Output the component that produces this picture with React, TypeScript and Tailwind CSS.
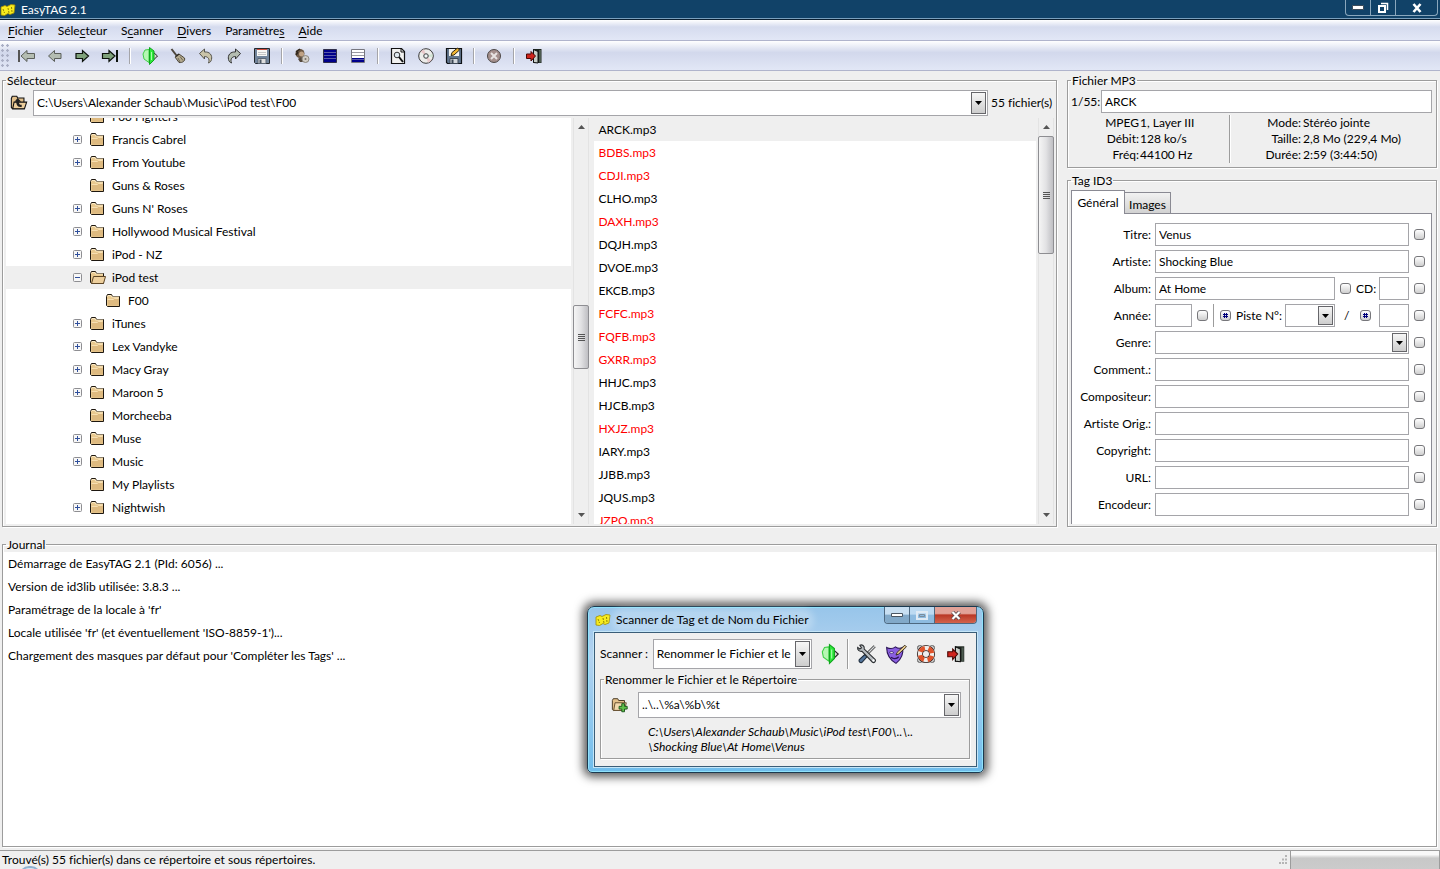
import type React from "react"

import { useState } from "react"

interface TreeItem {
  name: string
  expander?: "plus" | "minus"
  child?: boolean
  selected?: boolean
}

const folders: TreeItem[] = [
  { name: "Foo Fighters" },
  { name: "Francis Cabrel", expander: "plus" },
  { name: "From Youtube", expander: "plus" },
  { name: "Guns & Roses" },
  { name: "Guns N' Roses", expander: "plus" },
  { name: "Hollywood Musical Festival", expander: "plus" },
  { name: "iPod - NZ", expander: "plus" },
  { name: "iPod test", expander: "minus", selected: true },
  { name: "F00", child: true },
  { name: "iTunes", expander: "plus" },
  { name: "Lex Vandyke", expander: "plus" },
  { name: "Macy Gray", expander: "plus" },
  { name: "Maroon 5", expander: "plus" },
  { name: "Morcheeba" },
  { name: "Muse", expander: "plus" },
  { name: "Music", expander: "plus" },
  { name: "My Playlists" },
  { name: "Nightwish", expander: "plus" },
]

const files = [
  { name: "ARCK.mp3", changed: false },
  { name: "BDBS.mp3", changed: true },
  { name: "CDJI.mp3", changed: true },
  { name: "CLHO.mp3", changed: false },
  { name: "DAXH.mp3", changed: true },
  { name: "DQJH.mp3", changed: false },
  { name: "DVOE.mp3", changed: false },
  { name: "EKCB.mp3", changed: false },
  { name: "FCFC.mp3", changed: true },
  { name: "FQFB.mp3", changed: true },
  { name: "GXRR.mp3", changed: true },
  { name: "HHJC.mp3", changed: false },
  { name: "HJCB.mp3", changed: false },
  { name: "HXJZ.mp3", changed: true },
  { name: "IARY.mp3", changed: false },
  { name: "JJBB.mp3", changed: false },
  { name: "JQUS.mp3", changed: false },
  { name: "JZPQ.mp3", changed: true },
]

const journal = [
  "Démarrage de EasyTAG 2.1 (PId: 6056) ...",
  "Version de id3lib utilisée: 3.8.3 ...",
  "Paramétrage de la locale à 'fr'",
  "Locale utilisée 'fr' (et éventuellement 'ISO-8859-1')...",
  "Chargement des masques par défaut pour 'Compléter les Tags' ...",
]

const menus = [
  ["", "F", "ichier"],
  ["Séle", "c", "teur"],
  ["S", "c", "anner"],
  ["", "D", "ivers"],
  ["Paramètre", "s", ""],
  ["", "A", "ide"],
]

const inputClass = "h-[23px] min-w-0 border border-[#a5a5a9] bg-white px-[3px] outline-none"

/* ---------- Icons ---------- */

const Icon = ({ size = 20, children }: { size?: number; children: React.ReactNode }) => (
  <svg width={size} height={size} viewBox="0 0 20 20" fill="none" className="shrink-0" aria-hidden="true">
    {children}
  </svg>
)

const FirstIcon = () => (
  <Icon>
    <path d="M3 4v12" stroke="#555" strokeWidth="2" />
    <path d="M5 10l6-5.500v3h7.500v5H11v3z" fill="#b4bdb2" stroke="#5b5f5b" />
  </Icon>
)

const PreviousIcon = () => (
  <Icon>
    <path d="M4.500 10l6-5.500v3H17v5h-6.500v3z" fill="#b4bdb2" stroke="#5b5f5b" />
  </Icon>
)

const NextIcon = () => (
  <Icon>
    <path d="M16.500 10l-6-5.500v3H4v5h6.500v3z" fill="#7ea17a" stroke="#0c120c" strokeWidth="1.200" />
  </Icon>
)

const LastIcon = () => (
  <Icon>
    <path d="M15 10L9 4.500v3H2.500v5H9v3z" fill="#7ea17a" stroke="#0c120c" strokeWidth="1.200" />
    <path d="M17 4v12" stroke="#0c120c" strokeWidth="2" />
  </Icon>
)

const ScanIcon = ({ size = 20 }: { size?: number }) => (
  <Icon size={size}>
    <path d="M9 3.500L5 4 3 8l1 5 5 3.500z" fill="#b6f7b4" stroke="#3fd048" />
    <path d="M13.500 6.500l4 3.500-4 4z" fill="#d8dcd2" stroke="#222" />
    <path d="M9.500 1.500v17l4.500-4.500V5z" fill="#2fe63c" stroke="#0ea61c" />
    <path d="M11.500 6v8" stroke="#a5ffa6" />
  </Icon>
)

const BroomIcon = () => (
  <Icon>
    <path d="M3.500 3l5 6.500" stroke="#4d463d" strokeWidth="2" />
    <path d="M7 11l4-3 5.500 4c1 3-2 5-5.500 4.500z" fill="#b5ab90" stroke="#4b463a" />
    <path d="M8 10.500L11 8" stroke="#2e2a22" strokeWidth="1.500" />
    <path d="M10 12l2 4M12 10.500l3 4" stroke="#6d6857" />
  </Icon>
)

const UndoIcon = () => (
  <Icon>
    <path d="M3.500 7.500L8.500 3v3c5-.5 8 3 7 7.500-.5 2-1.500 3-3 3.500 1.500-4-.5-6.500-4-6.500v2.500z" fill="#c9c3a8" stroke="#55534b" />
  </Icon>
)

const RedoIcon = () => (
  <Icon>
    <path d="M16.500 7.500L11.500 3v3c-5-.5-8 3-7 7.500.5 2 1.500 3 3 3.500-1.500-4 .5-6.500 4-6.500v2.500z" fill="#b4bdb2" stroke="#333" />
  </Icon>
)

const SaveIcon = () => (
  <Icon>
    <path d="M2.500 2.500h15v15h-14l-1-1z" fill="#71849b" stroke="#23272c" />
    <path d="M5 3h10v7H5z" fill="#f7f7f5" />
    <path d="M5 3.500h10" stroke="#d04a3a" />
    <path d="M6 6.500h8M6 8.500h8" stroke="#c5c5c5" />
    <path d="M6 12.500h8v5H6z" fill="#dedede" stroke="#5b6674" />
    <path d="M7.500 13.500h2v3.500h-2z" fill="#4b5663" />
  </Icon>
)

const ArtistIcon = () => (
  <Icon>
    <circle cx="8" cy="7.500" r="4.500" fill="#6b5641" />
    <circle cx="9.500" cy="8" r="2.500" fill="#c0a284" />
    <path d="M4 6l4-3M4 9l2-3" stroke="#2e261e" strokeWidth="1.500" />
    <path d="M6 13c2-2 5-2 6 0l1 3H8z" fill="#55493d" />
    <circle cx="13.500" cy="13" r="3.500" fill="#d2cdc5" stroke="#8d877e" />
    <circle cx="13.500" cy="13" r="1" fill="#77716a" />
  </Icon>
)

const SelectAllIcon = () => (
  <Icon>
    <path d="M3.500 3.500h13v13h-13z" fill="#00008b" stroke="#30304a" />
    <path d="M4 6.500h12M4 9.500h12M4 12.500h12" stroke="#5a5aa8" />
  </Icon>
)

const InvertIcon = () => (
  <Icon>
    <path d="M3.500 3.500h13v13h-13z" fill="#fff" stroke="#77777f" />
    <path d="M4 6.500h12M4 9.500h12" stroke="#9a9aa2" />
    <path d="M4 12h12v4H4z" fill="#00008b" />
    <path d="M4 13.500h12" stroke="#5a5aa8" />
  </Icon>
)

const SearchIcon = () => (
  <Icon>
    <path d="M3.500 2.500h10l3 3v12h-13z" fill="#f1f1ef" stroke="#111" strokeWidth="1.200" />
    <path d="M13 2.500V6h3.500" stroke="#111" />
    <circle cx="9" cy="9" r="2.800" fill="#dfe9ee" stroke="#333" />
    <path d="M11 11l4 5" stroke="#111" strokeWidth="2" />
  </Icon>
)

const DiscIcon = () => (
  <Icon>
    <circle cx="10" cy="10" r="7.300" fill="#ececea" stroke="#3b3b3b" />
    <path d="M10 10L4.500 5.500 8 3.200z" fill="#e9c7c9" />
    <path d="M10 10l5.500 4.500-3.500 2.300z" fill="#e9c9cc" />
    <path d="M10 10l6.500-2v3z" fill="#cfe6d2" />
    <circle cx="10" cy="10" r="2.300" fill="#cdd5da" stroke="#4d4d4d" />
    <circle cx="10" cy="10" r="1" fill="#fff" />
  </Icon>
)

const SaveEditIcon = () => (
  <Icon>
    <path d="M2.500 2.500h15v15h-14l-1-1z" fill="#61758c" stroke="#0f1215" strokeWidth="1.200" />
    <path d="M5 3h10v7H5z" fill="#f3f3f0" />
    <path d="M6 12.500h8v5H6z" fill="#d4d8dc" stroke="#3c4754" />
    <path d="M7.500 13.500h2v3.500h-2z" fill="#3b4653" />
    <path d="M7 9.500l1-3 5.500-4.500 2 2-5.500 5z" fill="#f2b632" stroke="#2c2410" />
  </Icon>
)

const StopIcon = () => (
  <Icon>
    <circle cx="10" cy="10" r="6.500" fill="#a48f8c" stroke="#4c4746" />
    <path d="M7 7l6 6M13 7l-6 6" stroke="#e8e4e3" strokeWidth="2" />
  </Icon>
)

const ExitIcon = ({ size = 20 }: { size?: number }) => (
  <Icon size={size}>
    <path d="M9 3h8.500v14H9z" fill="#1c241e" />
    <path d="M9.500 3.500l4.500 2V17l-4.500-.5z" fill="#c9cfc9" stroke="#111" />
    <path d="M15 4h2v12.500h-2z" fill="#4c5a4f" />
    <path d="M11.500 10L7 5.500v2.500H2.500v4.500H7V15z" fill="#d0241c" stroke="#4a0906" />
  </Icon>
)

const FolderIcon = ({ open = false }: { open?: boolean }) => (
  <svg width="16" height="16" viewBox="0 0 16 16" fill="none" className="shrink-0" aria-hidden="true">
    <path d="M.5 3.500l1-2h4l1 2h7v10H1.500l-1-1z" fill="#e9c98f" stroke="#1d1710" />
    <path d="M1.500 3.500l.5-1h3l.5 1.500H13" stroke="#fbe9c4" />
    {open ? (
      <path d="M3.500 6.500h12l-2 7h-12z" fill="#edcf9d" stroke="#5c4526" />
    ) : (
      <path d="M2 6h11v6.500H2z" fill="#deba80" />
    )}
    {!open && <path d="M1.500 6.500h6l1-1h4" stroke="#f7dfb2" />}
  </svg>
)

const UpFolderIcon = () => (
  <Icon size={18}>
    <path d="M1.500 5l1-2.500h5l1 2h7V16h-13l-1-1z" fill="#e2c08a" stroke="#111" strokeWidth="1.200" />
    <path d="M4.500 9h14l-2.500 7.500H3z" fill="#edcf9d" stroke="#111" strokeWidth="1.200" />
    <path d="M8.500 4.500L5 8.500h2c0 4 1.500 6 6 6v-2.500c-2.500 0-3-1-3-3.500h2.500z" fill="#222" />
  </Icon>
)

const AddFolderIcon = () => (
  <Icon size={18}>
    <path d="M1.500 5l1-2h5l1 2h6.500v11H2.500l-1-1z" fill="#e2c08a" stroke="#3b2d18" />
    <path d="M4.500 7.500H17L15 16H3z" fill="#f1d9ad" stroke="#5c4526" />
    <path d="M12 8.500h3v3h3v3h-3v3h-3v-3H9v-3h3z" fill="#5fbf4a" stroke="#17521a" />
  </Icon>
)

const ToolsIcon = () => (
  <Icon size={22}>
    <path d="M17 3L7 13" stroke="#333" strokeWidth="2.600" />
    <path d="M17 3L7 13" stroke="#d5d8da" strokeWidth="1.200" />
    <path d="M8 10.500l2 2-4.500 5c-1.500 1-3.500-.5-2.500-2.500z" fill="#52749b" stroke="#1e2c3b" />
    <path d="M3.500 2c2-.8 4.500.5 4 3.500l10 9.500c1 1.500-1 3.500-2.500 2.500L5.500 7.500C3 8 1 6 1.500 4l2 1.500 1.500-1z" fill="#b9bec2" stroke="#2d3033" />
    <circle cx="15.800" cy="15.800" r="1" fill="#fff" />
  </Icon>
)

const MaskIcon = () => (
  <Icon size={22}>
    <path d="M1.500 4c3 1.500 5.500 1.500 8-.5 2 1.500 4.500 1.500 6.500.5 1 6-1.500 11-6 14.500C5 15.500 1.500 10.500 1.500 4z" fill="#8a5fe0" stroke="#2b1457" />
    <path d="M4 8.500c1.500-1 3-.8 4 .3-1.500 1-3 .8-4-.3z" fill="#fff" stroke="#2b1457" strokeWidth=".6" />
    <path d="M5.500 13c2 1.500 5 1.500 7-.5" stroke="#2b1457" strokeWidth="1.300" />
    <path d="M10 11l1-2.500L18 2l1.500 1.500L12.500 10z" fill="#e5c98b" stroke="#2a2112" strokeWidth=".8" />
  </Icon>
)

const HelpIcon = () => (
  <Icon size={22}>
    <path d="M2.500 6V3.500l1-1H6M14 2.500h2.500l1 1V6M17.500 14v2.500l-1 1H14M6 17.500H3.500l-1-1V14" stroke="#666" />
    <circle cx="10" cy="10" r="5.500" stroke="#2a1a16" strokeWidth="5.500" />
    <circle cx="10" cy="10" r="5.500" stroke="#f0ece9" strokeWidth="4" />
    <circle cx="10" cy="10" r="5.500" stroke="#e0532a" strokeWidth="4" strokeDasharray="5.200 3.440" strokeDashoffset="-1.700" />
  </Icon>
)

const AppIcon = () => (
  <svg width="16" height="14" viewBox="0 0 16 14" className="shrink-0" aria-hidden="true">
    <path d="M1 4l4-1.500 2 1 4-2 4 .5-1 8-4 1.500-2-1-3.500 2L1 12z" fill="#f7ec1e" stroke="#a08c00" strokeWidth=".8" />
    <path d="M3 6l1.500 4M8 5l1 5M11.500 4l.5 5" stroke="#8f8200" strokeWidth="1" strokeDasharray="2 1" />
  </svg>
)

/* ---------- Small widgets ---------- */

const MiniButton = ({ label, hash = false }: { label: string; hash?: boolean }) => (
  <button
    type="button"
    aria-label={label}
    className="flex h-[11px] w-[11px] shrink-0 items-center justify-center rounded-[3px] border border-[#77777b] bg-linear-to-b from-white to-[#cfcfcf]"
  >
    {hash && (
      <svg width="7" height="7" viewBox="0 0 7 7" aria-hidden="true">
        <path d="M2.500 1v5M4.500 1v5M1 2.500h5M1 4.500h5" stroke="#00007a" strokeWidth="1" />
      </svg>
    )}
  </button>
)

interface ComboProps {
  id: string
  label?: string
  value?: string
  className: string
}

const Combo = ({ id, label, value = "", className }: ComboProps) => (
  <div className={`relative flex ${className}`}>
    <select
      id={id}
      aria-label={label}
      className="w-full min-w-0 appearance-none border border-[#a5a5a9] bg-white pr-[18px] pl-[3px] outline-none"
    >
      <option>{value}</option>
    </select>
    <span className="pointer-events-none absolute inset-y-0.5 right-0.5 flex w-[15px] items-center justify-center border border-[#66666a] bg-linear-to-b from-[#f6f6f6] to-[#cdcdcd]">
      <svg width="7" height="4" viewBox="0 0 7 4" aria-hidden="true">
        <path d="M0 0h7L3.500 4z" fill="#000" />
      </svg>
    </span>
  </div>
)

interface ScrollbarProps {
  before: number
  thumb: number
  after: number
}

const Scrollbar = ({ before, thumb, after }: ScrollbarProps) => (
  <div
    style={{ gridTemplateRows: `18px ${before}fr ${thumb}fr ${after}fr 18px` }}
    className="grid w-4 shrink-0 border-x border-[#e3e3e3] bg-[#efefef]"
  >
    <div className="flex items-center justify-center">
      <svg width="7" height="4" viewBox="0 0 7 4" aria-hidden="true">
        <path d="M0 4h7L3.500 0z" fill="#555" />
      </svg>
    </div>
    <div />
    <div className="-mx-px flex flex-col items-center justify-center gap-px rounded-[2px] border border-[#8e8e92] bg-linear-to-r from-[#f5f5f5] via-[#e2e2e4] to-[#bfbfc3]">
      <span className="h-px w-[7px] bg-[#555]" />
      <span className="h-px w-[7px] bg-[#555]" />
      <span className="h-px w-[7px] bg-[#555]" />
      <span className="h-px w-[7px] bg-[#555]" />
    </div>
    <div />
    <div className="flex items-center justify-center">
      <svg width="7" height="4" viewBox="0 0 7 4" aria-hidden="true">
        <path d="M0 0h7L3.500 4z" fill="#555" />
      </svg>
    </div>
  </div>
)

interface FrameProps {
  title: string
  className?: string
  bodyClassName?: string
  children: React.ReactNode
}

const Frame = ({ title, className = "", bodyClassName = "", children }: FrameProps) => (
  <fieldset
    className={`flex min-w-0 flex-col border border-[#9c9c9c] shadow-[1px_1px_0_#fff,inset_1px_1px_0_#fff] ${className}`}
  >
    <legend className="ml-[3px] h-[15px] px-px leading-4">{title}</legend>
    <div className={`min-h-0 flex-1 ${bodyClassName}`}>{children}</div>
  </fieldset>
)

const ToolButton = ({ label, children }: { label: string; children: React.ReactNode }) => (
  <button type="button" aria-label={label} className="flex h-full w-7 items-center justify-center">
    {children}
  </button>
)

const ToolSeparator = () => (
  <div className="flex w-3 justify-center">
    <span className="h-4 w-0.5 border-r border-l border-r-white border-l-[#a5a5a9]" />
  </div>
)

/* ---------- Panels ---------- */

const TitleBar = () => (
  <header className="flex h-5 shrink-0 items-start justify-between border-b border-[#0b1f31] bg-[#114268] text-white shadow-[inset_0_-1px_0_#7ba0bd]">
    <div className="flex h-[19px] items-center gap-[5px]">
      <AppIcon />
      <h1>EasyTAG 2.1</h1>
    </div>
    <div className="mr-0.5 flex h-4 divide-x divide-[#8aa7bd] rounded-b-[4px] border border-t-0 border-[#8aa7bd]">
      <button type="button" aria-label="Réduire" className="flex w-[25px] items-center justify-center">
        <svg width="12" height="5" viewBox="0 0 12 5" aria-hidden="true">
          <path d="M.5.500h11v4H.5z" fill="#fff" stroke="#3d4c5a" />
        </svg>
      </button>
      <button type="button" aria-label="Restaurer" className="flex w-[25px] items-center justify-center">
        <svg width="12" height="12" viewBox="0 0 12 12" fill="none" aria-hidden="true">
          <path d="M4 1.500h6.500V8" stroke="#fff" strokeWidth="1.500" />
          <path d="M2 4h6v6H2z" stroke="#fff" strokeWidth="2" />
        </svg>
      </button>
      <button type="button" aria-label="Fermer" className="flex w-[41px] items-center justify-center">
        <svg width="12" height="10" viewBox="0 0 12 10" aria-hidden="true">
          <path d="M2.500 1l7 8M9.500 1l-7 8" stroke="#fff" strokeWidth="2.600" />
        </svg>
      </button>
    </div>
  </header>
)

const MenuBar = () => (
  <nav className="flex h-[21px] shrink-0 items-center gap-3.5 border-b border-[#b0b4cc] bg-linear-to-b from-white from-0% via-[#d5dbee] via-35% to-[#e2e7f6] pt-0.5 pl-2">
    {menus.map(([before, key, after]) => (
      <button key={before + key + after} type="button">
        {before}
        <u className="underline-offset-2">{key}</u>
        {after}
      </button>
    ))}
  </nav>
)

const ToolBar = () => (
  <div className="flex h-[30px] shrink-0 items-center border-b border-[#b0b4cc] bg-linear-to-b from-white from-0% via-[#d2d8ec] via-40% to-[#e2e7f6]">
    <div className="mr-0.5 h-[26px] w-2.5 bg-[radial-gradient(circle,#a9aec4_1px,transparent_1.500px)] bg-[size:5px_5px]" />
    <ToolButton label="Premier fichier"><FirstIcon /></ToolButton>
    <ToolButton label="Fichier précédent"><PreviousIcon /></ToolButton>
    <ToolButton label="Fichier suivant"><NextIcon /></ToolButton>
    <ToolButton label="Dernier fichier"><LastIcon /></ToolButton>
    <ToolSeparator />
    <ToolButton label="Scanner les fichiers"><ScanIcon /></ToolButton>
    <ToolButton label="Effacer les tags"><BroomIcon /></ToolButton>
    <ToolButton label="Annuler"><UndoIcon /></ToolButton>
    <ToolButton label="Rétablir"><RedoIcon /></ToolButton>
    <ToolButton label="Enregistrer"><SaveIcon /></ToolButton>
    <ToolSeparator />
    <ToolButton label="Afficher par artiste"><ArtistIcon /></ToolButton>
    <ToolButton label="Tout sélectionner"><SelectAllIcon /></ToolButton>
    <ToolButton label="Inverser la sélection"><InvertIcon /></ToolButton>
    <ToolSeparator />
    <ToolButton label="Rechercher"><SearchIcon /></ToolButton>
    <ToolButton label="CDDB"><DiscIcon /></ToolButton>
    <ToolButton label="Créer une liste"><SaveEditIcon /></ToolButton>
    <ToolSeparator />
    <ToolButton label="Arrêter"><StopIcon /></ToolButton>
    <ToolSeparator />
    <ToolButton label="Quitter"><ExitIcon /></ToolButton>
  </div>
)

const FolderTree = () => (
  <div className="min-w-0 flex-[566] overflow-hidden bg-white">
    {/* the list is scrolled part way into its first row */}
    <ul className="-mt-[13px]">
      {folders.map((folder) => (
        <li
          key={folder.name}
          className={`flex h-[23px] items-center ${folder.child ? "pl-[83px]" : "pl-[67px]"} ${
            folder.selected ? "bg-[#efefef]" : ""
          }`}
        >
          <span className="mr-2 flex h-[9px] w-[9px] shrink-0">
            {folder.expander && (
              <svg width="9" height="9" viewBox="0 0 9 9" aria-hidden="true">
                <rect x=".5" y=".5" width="8" height="8" rx="1" fill="#f7f7f7" stroke="#8e8e92" />
                <path d="M2 4.500h5" stroke="#2f4f9c" />
                {folder.expander === "plus" && <path d="M4.500 2v5" stroke="#2f4f9c" />}
              </svg>
            )}
          </span>
          <FolderIcon open={folder.selected} />
          <span className="ml-1.5">{folder.name}</span>
        </li>
      ))}
    </ul>
  </div>
)

const FileList = () => (
  <ul className="min-w-0 flex-[442] overflow-hidden bg-white">
    {files.map((file, index) => (
      <li
        key={file.name}
        className={`flex h-[23px] items-center pl-1 ${index === 0 ? "bg-[#efefef]" : ""} ${
          file.changed ? "text-[#ff0000]" : ""
        }`}
      >
        {file.name}
      </li>
    ))}
  </ul>
)

const Selector = () => (
  <Frame
    title="Sélecteur"
    className="min-h-0 flex-1"
    bodyClassName="flex flex-col pr-0.5 pb-0.5 pl-[3px]"
  >
    <div className="mt-0.5 flex items-center">
      <button type="button" aria-label="Dossier parent" className="flex w-[27px] pl-1">
        <UpFolderIcon />
      </button>
      <Combo
        id="path"
        label="Chemin"
        value="C:\Users\Alexander Schaub\Music\iPod test\F00"
        className="h-[26px] min-w-0 flex-1"
      />
      <span className="w-[66px] pl-[3px] whitespace-nowrap">55 fichier(s)</span>
    </div>
    <div className="mt-0.5 flex min-h-0 flex-1">
      <FolderTree />
      <div className="w-0.5" />
      <Scrollbar before={169} thumb={64} after={137} />
      <div className="w-[5px]" />
      <FileList />
      <div className="w-0.5" />
      <Scrollbar before={0} thumb={118} after={252} />
    </div>
  </Frame>
)

const FileInfo = () => (
  <Frame title="Fichier MP3" bodyClassName="px-[3px] pb-1">
    <div className="mt-0.5 mr-px flex items-center">
      <label htmlFor="filename" className="w-[30px] whitespace-nowrap">
        1/55:
      </label>
      <input id="filename" defaultValue="ARCK" className={`${inputClass} flex-1`} />
    </div>
    <div className="mt-0.5 flex leading-4">
      <dl className="grid w-[158px] grid-cols-[68px_1fr] gap-x-px whitespace-nowrap">
        <dt className="text-right">MPEG</dt>
        <dd>1, Layer III</dd>
        <dt className="text-right">Débit:</dt>
        <dd>128 ko/s</dd>
        <dt className="text-right">Fréq:</dt>
        <dd>44100 Hz</dd>
      </dl>
      <span className="w-0.5 border-r border-l border-r-white border-l-[#9c9c9c]" />
      <dl className="grid flex-1 grid-cols-[70px_1fr] gap-x-0.5 whitespace-nowrap">
        <dt className="text-right">Mode:</dt>
        <dd>Stéréo jointe</dd>
        <dt className="text-right">Taille:</dt>
        <dd>2,8 Mo (229,4 Mo)</dd>
        <dt className="text-right">Durée:</dt>
        <dd>2:59 (3:44:50)</dd>
      </dl>
    </div>
  </Frame>
)

interface TagRowProps {
  id: string
  label: string
  children: React.ReactNode
}

const TagRow = ({ id, label, children }: TagRowProps) => (
  <div className="flex h-[23px] shrink-0 items-center">
    <label htmlFor={id} className="mr-1 w-[79px] shrink-0 text-right whitespace-nowrap">
      {label}:
    </label>
    {children}
    <div className="ml-[5px] flex">
      <MiniButton label={`Appliquer ${label} à tous les fichiers`} />
    </div>
  </div>
)

const TagPanel = () => {
  const [tab, setTab] = useState("general")

  return (
    <Frame title="Tag ID3" className="min-h-0 flex-1" bodyClassName="flex flex-col px-[3px] pb-0.5">
      <div className="mt-0.5 flex items-end" role="tablist">
        <button
          type="button"
          role="tab"
          aria-selected={tab === "general"}
          onClick={() => setTab("general")}
          className="z-10 -mb-px h-6 w-[54px] border border-b-0 border-[#8a8a93] bg-white"
        >
          Général
        </button>
        <button
          type="button"
          role="tab"
          aria-selected={tab === "images"}
          onClick={() => setTab("images")}
          className="h-[21px] w-[46px] border border-b-0 border-l-0 border-[#8a8a93] bg-linear-to-b from-[#f2f2f2] to-[#d2d2d2] pt-1"
        >
          Images
        </button>
      </div>
      <div className="mr-px flex min-h-0 flex-1 flex-col gap-1 overflow-hidden border border-b-0 border-[#8a8a93] bg-white pt-[9px] pr-1.5">
        <TagRow id="title" label="Titre">
          <input id="title" defaultValue="Venus" className={`${inputClass} flex-1`} />
        </TagRow>
        <TagRow id="artist" label="Artiste">
          <input id="artist" defaultValue="Shocking Blue" className={`${inputClass} flex-1`} />
        </TagRow>
        <TagRow id="album" label="Album">
          <input id="album" defaultValue="At Home" className={`${inputClass} mr-[5px] flex-1`} />
          <MiniButton label="Appliquer l'album" />
          <label htmlFor="disc" className="ml-[5px] w-[23px] whitespace-nowrap">
            CD:
          </label>
          <input id="disc" className={`${inputClass} w-[30px]`} />
        </TagRow>
        <TagRow id="year" label="Année">
          <input id="year" className={`${inputClass} mr-[5px] w-[37px]`} />
          <MiniButton label="Appliquer l'année" />
          <span className="mx-1 h-full w-0.5 border-r border-[#9c9c9c]" />
          <span className="ml-0.5 flex">
            <MiniButton label="Numéroter les pistes" hash />
          </span>
          <label htmlFor="track" className="ml-[5px] flex-1 whitespace-nowrap">
            Piste N°:
          </label>
          <Combo id="track" className="h-[23px] w-[50px]" />
          <span className="w-[25px] pl-[9px]">/</span>
          <MiniButton label="Nombre de pistes" hash />
          <input aria-label="Nombre total de pistes" className={`${inputClass} ml-2 w-[30px]`} />
        </TagRow>
        <TagRow id="genre" label="Genre">
          <Combo id="genre" className="h-[23px] flex-1" />
        </TagRow>
        <TagRow id="comment" label="Comment.">
          <input id="comment" className={`${inputClass} flex-1`} />
        </TagRow>
        <TagRow id="composer" label="Compositeur">
          <input id="composer" className={`${inputClass} flex-1`} />
        </TagRow>
        <TagRow id="origArtist" label="Artiste Orig.">
          <input id="origArtist" className={`${inputClass} flex-1`} />
        </TagRow>
        <TagRow id="copyright" label="Copyright">
          <input id="copyright" className={`${inputClass} flex-1`} />
        </TagRow>
        <TagRow id="url" label="URL">
          <input id="url" className={`${inputClass} flex-1`} />
        </TagRow>
        <TagRow id="encoder" label="Encodeur">
          <input id="encoder" className={`${inputClass} flex-1`} />
        </TagRow>
      </div>
    </Frame>
  )
}

const StatusBar = () => (
  <footer className="relative flex h-[19px] shrink-0 items-stretch overflow-hidden">
    <div className="flex flex-1 items-center justify-between border-t border-[#9c9c9c] pl-0.5">
      <span>Trouvé(s) 55 fichier(s) dans ce répertoire et sous répertoires.</span>
      <svg width="10" height="10" viewBox="0 0 10 10" className="mr-0.5" aria-hidden="true">
        <path d="M7 1h2M4 4.500h2M7 4.500h2M1 8h2M4 8h2M7 8h2" stroke="#b5b5b5" strokeWidth="2" />
      </svg>
    </div>
    <div className="w-[150px] border border-b-0 border-[#9c9c9c] bg-linear-to-b from-[#f8f8f8] from-20% via-[#c8c8c8] via-40% to-[#cbcbcb]" />
    {/* busy cursor peeking over the bottom edge */}
    <span className="absolute top-4 left-[19px] h-5 w-[22px] rounded-full border-2 border-[#8fb0cf] bg-[#d3e3f1]" />
  </footer>
)

const ScannerDialog = () => (
  <section
    role="dialog"
    aria-label="Scanner de Tag et de Nom du Fichier"
    className="absolute top-[606px] left-[calc(50%-133px)] flex w-[397px] flex-col rounded-t-[7px] rounded-b-[5px] border border-[#1b3a50] bg-linear-to-b from-[#97c5ea] from-0% via-[#b3d3f0] via-30% to-[#6fbdec] px-1.5 pb-[5px] shadow-[0_0_10px_4px_rgba(0,0,0,0.65),inset_0_0_0_1px_#8fe2fb]"
  >
    <header className="flex h-6 justify-between">
      <div className="flex items-center gap-1 pt-0.5 pl-px">
        <AppIcon />
        <h2 className="rounded-full bg-white/25 px-px shadow-[0_0_6px_4px_rgba(255,255,255,0.25)]">
          Scanner de Tag et de Nom du Fichier
        </h2>
      </div>
      <div className="flex h-[17px] divide-x divide-[#4d6880] overflow-hidden rounded-b-[4px] border border-t-0 border-[#4d6880]">
        <button
          type="button"
          aria-label="Réduire"
          className="flex w-[25px] items-center justify-center bg-linear-to-b from-[#c8dff2] from-45% to-[#82a9c9] to-50%"
        >
          <svg width="12" height="4" viewBox="0 0 12 4" aria-hidden="true">
            <path d="M.5.500h11v3H.5z" fill="#fff" stroke="#4a5663" />
          </svg>
        </button>
        <button
          type="button"
          aria-label="Agrandir"
          className="flex w-[25px] items-center justify-center bg-linear-to-b from-[#bcdaf2] from-45% to-[#8dbbe0] to-50%"
        >
          <svg width="12" height="9" viewBox="0 0 12 9" fill="none" aria-hidden="true">
            <path d="M1 1h10v7H1z" stroke="#dfeaf4" strokeWidth="2" />
            <path d="M3.500 3.500h5v2h-5z" stroke="#7a8c9c" />
          </svg>
        </button>
        <button
          type="button"
          aria-label="Fermer"
          className="flex w-[41px] items-center justify-center bg-linear-to-b from-[#e2a298] from-40% via-[#b93726] via-50% to-[#d3634c]"
        >
          <svg width="12" height="9" viewBox="0 0 12 9" aria-hidden="true">
            <path d="M2.500 1l7 7M9.500 1l-7 7" stroke="#5a4a4c" strokeWidth="3.800" />
            <path d="M2.500 1l7 7M9.500 1l-7 7" stroke="#fff" strokeWidth="2.200" />
          </svg>
        </button>
      </div>
    </header>
    <div className="mt-px border border-[#3a5d78] bg-[#efefef] px-[5px] pt-1.5 pb-[7px] shadow-[0_0_0_1px_#c5e6f8]">
      <div className="flex h-[30px] items-center">
        <label htmlFor="scanner" className="w-[53px] whitespace-nowrap">
          Scanner :
        </label>
        <Combo id="scanner" value="Renommer le Fichier et le" className="h-[30px] w-40" />
        <button type="button" aria-label="Scanner" className="flex w-[35px] justify-center">
          <ScanIcon size={22} />
        </button>
        <span className="mr-[3px] h-full w-0.5 border-r border-l border-r-white border-l-[#9c9c9c]" />
        <button type="button" aria-label="Masques" className="flex w-[29px] justify-center">
          <ToolsIcon />
        </button>
        <button type="button" aria-label="Éditeur de masques" className="flex w-[30px] justify-center">
          <MaskIcon />
        </button>
        <button type="button" aria-label="Légende" className="flex w-[30px] justify-center">
          <HelpIcon />
        </button>
        <button type="button" aria-label="Fermer la fenêtre" className="flex w-[30px] justify-center">
          <ExitIcon size={22} />
        </button>
      </div>
      <Frame title="Renommer le Fichier et le Répertoire" className="mt-[3px] mr-px" bodyClassName="px-2 pb-1">
        <div className="mt-[5px] flex items-center">
          <button type="button" aria-label="Ajouter un dossier" className="flex w-[29px] pl-0.5">
            <AddFolderIcon />
          </button>
          <Combo id="mask" label="Masque" value="..\..\%a\%b\%t" className="h-[26px] flex-1" />
        </div>
        <p className="mt-1.5 ml-[39px] leading-[15px] italic">
          C:\Users\Alexander Schaub\Music\iPod test\F00\..\..
          <br />
          \Shocking Blue\At Home\Venus
        </p>
      </Frame>
    </div>
  </section>
)

const App = () => {
  return (
    <div className="relative flex h-screen flex-col overflow-hidden bg-[#efefef] font-['Lato','Open_Sans',sans-serif] text-[12px] leading-4 text-black [font-variant-ligatures:none]">
      <TitleBar />
      <MenuBar />
      <ToolBar />
      <main className="flex min-h-0 flex-1 flex-col gap-2.5 pt-0.5 pr-[3px] pb-[3px] pl-0.5">
        <div className="flex min-h-0 flex-[454] gap-2.5">
          <Selector />
          <div className="flex w-[370px] shrink-0 flex-col gap-[5px]">
            <FileInfo />
            <TagPanel />
          </div>
        </div>
        <div className="flex min-h-0 flex-[310]">
          <Frame title="Journal" className="flex-1" bodyClassName="flex">
            <ul className="flex-1 overflow-hidden bg-white">
              {journal.map((line) => (
                <li key={line} className="flex h-[23px] items-center pl-[5px]">
                  {line}
                </li>
              ))}
            </ul>
          </Frame>
        </div>
      </main>
      <StatusBar />
      <ScannerDialog />
    </div>
  )
}

export default App
